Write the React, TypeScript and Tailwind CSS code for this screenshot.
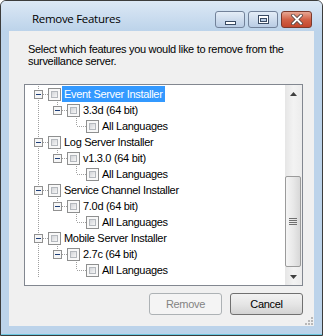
type Row = { label: string; level: 1 | 2 | 3; selected?: boolean };

const rows: Row[] = [
  { label: 'Event Server Installer', level: 1, selected: true },
  { label: '3.3d (64 bit)', level: 2 },
  { label: 'All Languages', level: 3 },
  { label: 'Log Server Installer', level: 1 },
  { label: 'v1.3.0 (64 bit)', level: 2 },
  { label: 'All Languages', level: 3 },
  { label: 'Service Channel Installer', level: 1 },
  { label: '7.0d (64 bit)', level: 2 },
  { label: 'All Languages', level: 3 },
  { label: 'Mobile Server Installer', level: 1 },
  { label: '2.7c (64 bit)', level: 2 },
  { label: 'All Languages', level: 3 },
];

// tree connector lines + expander box for one row
const Gutter = ({ level }: { level: number }) => {
  const w = 23 + 19 * (level - 1);
  const cx = 13 + 19 * (level - 1);
  return (
    <svg width={w} height={16} className="shrink-0" shapeRendering="crispEdges">
      <g stroke="#a0a0a0" strokeDasharray="1 1">
        <line x1={13.5} x2={13.5} y1={0} y2={16} />
        {level > 1 && <line x1={cx + 0.5} x2={cx + 0.5} y1={0} y2={8} />}
        <line x1={level === 3 ? cx + 1 : cx + 5} x2={w} y1={8.5} y2={8.5} />
      </g>
      {level < 3 && (
        <g>
          <rect x={cx - 3.5} y={4.5} width={8} height={8} fill="#f6f6f6" stroke="#919191" />
          <line x1={cx - 2} x2={cx + 3} y1={8.5} y2={8.5} stroke="#1d3e78" />
        </g>
      )}
    </svg>
  );
};

const Check = () => (
  <div className="mt-[2px] h-[13px] w-[13px] shrink-0 border border-[#8e8f8f] bg-[#f8f8f8] p-[2px]">
    <div className="h-full w-full border border-[#b4b8bd] bg-gradient-to-br from-[#d3d5d9] to-[#f6f6f6]" />
  </div>
);

const Arrow = ({ down }: { down?: boolean }) => (
  <svg width={7} height={4} className={down ? 'rotate-180' : ''}>
    <path d="M3.5 0 L7 4 L0 4 Z" fill="#404040" />
  </svg>
);

export default function App() {
  return (
    <div className="h-[336px] w-[323px] bg-white font-['Liberation_Sans',Arial,sans-serif] text-[11px] tracking-[-0.3px] text-black">
      <div className="flex h-full flex-col overflow-hidden rounded-t-[6px] border border-[#3c3c3c] bg-[#bcd3ea]">
        {/* title bar */}
        <div className="flex h-[30px] shrink-0 items-start bg-gradient-to-b from-[#dce8f5] to-[#bcd3ea]">
          <span className="ml-[31px] mt-[10px] font-['Open_Sans',sans-serif] text-[11.5px] leading-[16px] tracking-[-0.3px] text-black">
            Remove Features
          </span>
          <div className="ml-auto mr-[10px] mt-[10px] flex gap-[3px]">
            <div className="flex h-[17px] w-[30px] items-end justify-center rounded-[3px] border border-[#72829a] bg-gradient-to-b from-[#e4edf7] to-[#b9cce4] pb-[2px]">
              <svg width={11} height={4}>
                <rect x={0.5} y={0.5} width={10} height={3} fill="#fff" stroke="#3a4b63" />
              </svg>
            </div>
            <div className="flex h-[17px] w-[30px] items-center justify-center rounded-[3px] border border-[#72829a] bg-gradient-to-b from-[#e4edf7] to-[#b9cce4]">
              <svg width={11} height={9}>
                <rect x={0.5} y={0.5} width={10} height={8} fill="#fff" stroke="#3a4b63" />
                <rect x={2.5} y={3.5} width={6} height={3} fill="#b9cce4" stroke="#3a4b63" />
              </svg>
            </div>
            <div className="flex h-[17px] w-[31px] items-center justify-center rounded-[3px] border border-[#7c3a2c] bg-gradient-to-b from-[#e7a794] via-[#d26247] to-[#c4472d]">
              <svg width={12} height={11}>
                <path d="M2 1.5 L10 9.5 M10 1.5 L2 9.5" stroke="#5a4a48" strokeWidth={3.6} strokeLinecap="square" />
                <path d="M2 1.5 L10 9.5 M10 1.5 L2 9.5" stroke="#fff" strokeWidth={1.8} strokeLinecap="square" />
              </svg>
            </div>
          </div>
        </div>

        {/* client area */}
        <div className="mx-[8px] flex flex-1 flex-col bg-[#f0f0f0]">
          <p className="pl-[19px] pt-[12px] leading-[12px]">
            Select which features you would like to remove from the
            <br />
            surveillance server.
          </p>

          <div className="ml-[15px] mt-[17px] flex h-[202px] w-[279px] border border-[#828790] bg-white">
            <div className="flex-1 pt-[1px]">
              {rows.map((r, i) => (
                <div key={i} className="flex h-[16px] items-start">
                  <Gutter level={r.level} />
                  <Check />
                  <span
                    className={
                      r.selected
                        ? 'ml-[1px] h-[16px] bg-[#3399ff] px-[2px] leading-[16px] text-white'
                        : 'ml-[1px] h-[16px] px-[2px] leading-[16px]'
                    }
                  >
                    {r.label}
                  </span>
                </div>
              ))}
            </div>

            {/* scrollbar */}
            <div className="flex w-[17px] flex-col bg-gradient-to-r from-[#e6e6e6] via-[#f3f3f3] to-[#ececec]">
              <div className="flex h-[17px] items-center justify-center">
                <Arrow />
              </div>
              <div className="flex flex-1 flex-col justify-end pb-[1px]">
                <div className="flex h-[91px] w-[16px] items-center justify-center rounded-[2px] border border-[#9b9b9b] bg-gradient-to-r from-[#f5f5f5] via-[#e9e9e9] to-[#d8d8d8]">
                  <svg width={8} height={8} shapeRendering="crispEdges">
                    <g stroke="#6f6f6f">
                      <line x1={0} x2={8} y1={0.5} y2={0.5} />
                      <line x1={0} x2={8} y1={2.5} y2={2.5} />
                      <line x1={0} x2={8} y1={4.5} y2={4.5} />
                      <line x1={0} x2={8} y1={6.5} y2={6.5} />
                    </g>
                  </svg>
                </div>
              </div>
              <div className="flex h-[17px] items-center justify-center">
                <Arrow down />
              </div>
            </div>
          </div>

          <div className="mr-[11px] mt-[7px] flex justify-end gap-[8px]">
            <button className="h-[22px] w-[73px] rounded-[3px] border border-[#adb2b5] bg-[#f4f4f4] text-[11px] text-[#838383]">
              Remove
            </button>
            <button className="h-[22px] w-[73px] rounded-[3px] border border-[#707070] bg-gradient-to-b from-[#f2f2f2] via-[#e6e6e6] to-[#d3d3d3] text-[11px] text-black">
              Cancel
            </button>
          </div>

          <div className="mt-auto flex justify-end pb-[1px] pr-[1px]">
            <svg width={8} height={8}>
              <g fill="#b8b8b8">
                <rect x={6} y={0} width={2} height={2} />
                <rect x={3} y={3} width={2} height={2} />
                <rect x={6} y={3} width={2} height={2} />
                <rect x={0} y={6} width={2} height={2} />
                <rect x={3} y={6} width={2} height={2} />
                <rect x={6} y={6} width={2} height={2} />
              </g>
            </svg>
          </div>
        </div>
        <div className="h-[9px] shrink-0 border-b border-[#6bc7e0]" />
      </div>
    </div>
  );
}
